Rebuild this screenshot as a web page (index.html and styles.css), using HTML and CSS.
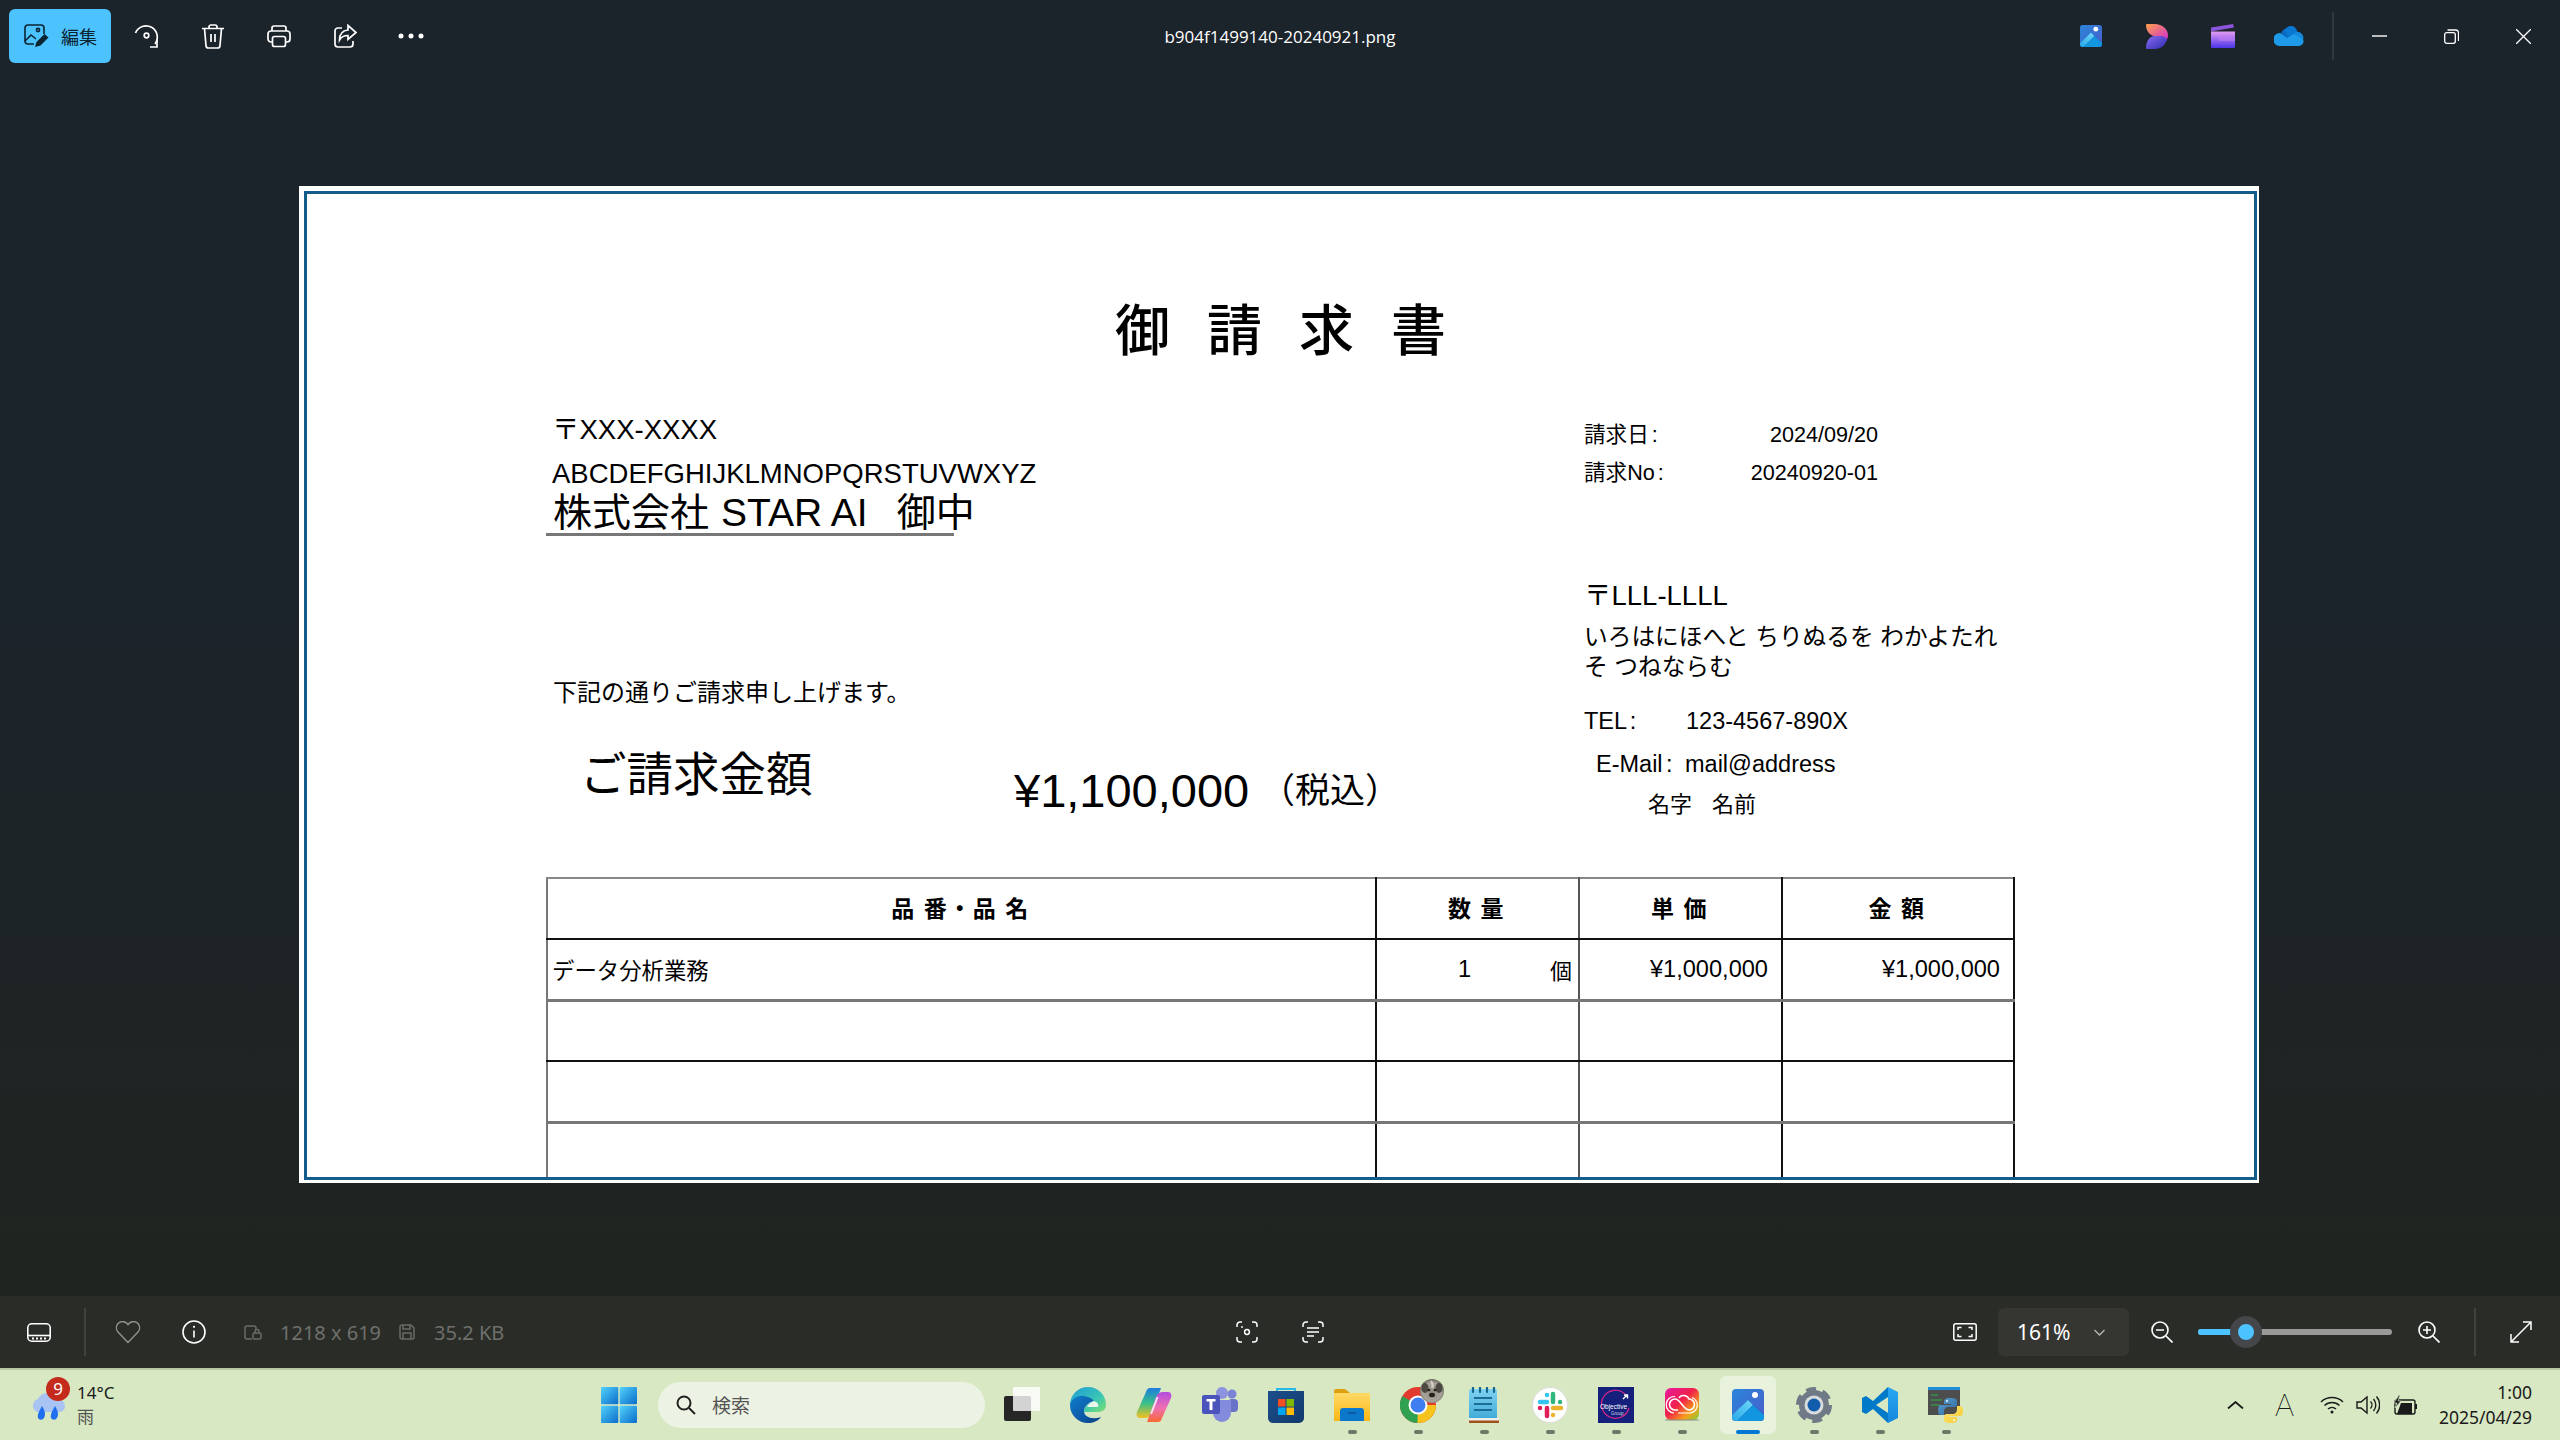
FILE: index.html
```html
<!DOCTYPE html>
<html lang="ja">
<head>
  <meta charset="UTF-8">
  <title>b904f1499140-20240921.png</title>
  <link rel="stylesheet" href="styles.css">
</head>
<body>
  <svg class="defs" width="0" height="0">
    <defs>
      <linearGradient id="photoBg" x1="0" y1="0" x2="1" y2="1"><stop offset="0" stop-color="#2a86dc"/><stop offset="1" stop-color="#4a5cc8"/></linearGradient>
      <linearGradient id="photoHill" x1="0" y1="1" x2="1" y2="0"><stop offset="0" stop-color="#27a8ea"/><stop offset="1" stop-color="#6fd8f8"/></linearGradient>
      <linearGradient id="designTop" x1="0" y1="0" x2="1" y2="1"><stop offset="0" stop-color="#ffa04a"/><stop offset="1" stop-color="#d02fd0"/></linearGradient>
      <linearGradient id="designLow" x1="0" y1="0" x2="1" y2="1"><stop offset="0" stop-color="#8a6cf0"/><stop offset="1" stop-color="#2b2bb0"/></linearGradient>
      <linearGradient id="clip" x1="0" y1="0" x2="0" y2="1"><stop offset="0" stop-color="#e59cf2"/><stop offset="1" stop-color="#4a35e8"/></linearGradient>
      <linearGradient id="winLogo" x1="0" y1="0" x2="1" y2="1"><stop offset="0" stop-color="#52d2fb"/><stop offset="1" stop-color="#0a6ccb"/></linearGradient>
      <linearGradient id="edgeTop" x1="0" y1="0" x2="1" y2="1"><stop offset="0" stop-color="#1f9bd8"/><stop offset="0.6" stop-color="#39c6b4"/><stop offset="1" stop-color="#7fe06a"/></linearGradient>
      <linearGradient id="edgeLow" x1="0" y1="0" x2="1" y2="1"><stop offset="0" stop-color="#0f7fd0"/><stop offset="1" stop-color="#0b3f86"/></linearGradient>
      <linearGradient id="copA" x1="0" y1="0" x2="0" y2="1"><stop offset="0" stop-color="#1f7be0"/><stop offset="0.5" stop-color="#36c08a"/><stop offset="1" stop-color="#f4c020"/></linearGradient>
      <linearGradient id="copB" x1="0" y1="0" x2="0" y2="1"><stop offset="0" stop-color="#b44ee0"/><stop offset="0.55" stop-color="#f070b0"/><stop offset="1" stop-color="#f86a30"/></linearGradient>
      <linearGradient id="storeBag" x1="0" y1="0" x2="1" y2="1"><stop offset="0" stop-color="#1c4f8c"/><stop offset="1" stop-color="#123a6c"/></linearGradient>
      <linearGradient id="folder" x1="0" y1="0" x2="0" y2="1"><stop offset="0" stop-color="#ffd966"/><stop offset="1" stop-color="#fcb614"/></linearGradient>
      <linearGradient id="note" x1="0" y1="0" x2="0" y2="1"><stop offset="0" stop-color="#7ed2f0"/><stop offset="1" stop-color="#3fa9d8"/></linearGradient>
      <linearGradient id="cc" x1="0" y1="0" x2="1" y2="1"><stop offset="0" stop-color="#e81aa0"/><stop offset="0.45" stop-color="#f0204a"/><stop offset="0.75" stop-color="#f8a018"/><stop offset="1" stop-color="#7ed03a"/></linearGradient>
      <linearGradient id="vsLight" x1="0" y1="0" x2="0" y2="1"><stop offset="0" stop-color="#28a8f2"/><stop offset="1" stop-color="#1488dc"/></linearGradient>
      <linearGradient id="pyBlue" x1="0" y1="0" x2="1" y2="1"><stop offset="0" stop-color="#5a9fd4"/><stop offset="1" stop-color="#306998"/></linearGradient>
      <linearGradient id="pyYellow" x1="0" y1="0" x2="1" y2="1"><stop offset="0" stop-color="#ffe873"/><stop offset="1" stop-color="#f8c92e"/></linearGradient>
      <radialGradient id="dog" cx="0.5" cy="0.55" r="0.55"><stop offset="0" stop-color="#8f8b82"/><stop offset="0.7" stop-color="#a9a499"/><stop offset="1" stop-color="#6a665e"/></radialGradient>
    </defs>
  </svg>

  <div class="app">
    <header class="toolbar">
      <div class="toolbar-left">
        <button class="edit-btn">
          <svg width="26" height="24" viewBox="0 0 26 24" fill="none" stroke="#0b2431" stroke-width="1.6"><path d="M10 20H4a3 3 0 0 1-3-3V4a3 3 0 0 1 3-3h13a3 3 0 0 1 3 3v6"/><path d="M1 17l6-6 5 4"/><circle cx="14" cy="6" r="1.6"/><path d="M11 23l1.500-5 8-8 4 3.500-8 8z" fill="#0b2431" stroke="none"/></svg>
          <span>編集</span>
        </button>
        <span class="slot"><svg width="26" height="26" viewBox="0 0 26 26" fill="none" stroke="#fff" stroke-width="1.700"><path d="M1.500 10A11.300 11.300 0 1 1 21 21"/><path d="M16 24h7v-7"/><circle cx="12.500" cy="12.500" r="2.300"/></svg></span>
        <span class="slot"><svg width="24" height="25" viewBox="0 0 24 25" fill="none" stroke="#fff" stroke-width="1.700"><path d="M1 4.500h22M8 4.500V3a2 2 0 0 1 2-2h4a2 2 0 0 1 2 2v1.500"/><path d="M3.500 4.500l1.500 17a2.500 2.500 0 0 0 2.500 2.500h9a2.500 2.500 0 0 0 2.500-2.500l1.500-17"/><path d="M10 10v8M14 10v8"/></svg></span>
        <span class="slot"><svg width="24" height="24" viewBox="0 0 24 24" fill="none" stroke="#fff" stroke-width="1.700"><path d="M5 7V4a2 2 0 0 1 2-2h10a2 2 0 0 1 2 2v3"/><path d="M5 18H4a3 3 0 0 1-3-3v-5a3 3 0 0 1 3-3h16a3 3 0 0 1 3 3v5a3 3 0 0 1-3 3h-1"/><rect x="5.500" y="12.500" width="13" height="10" rx="2"/></svg></span>
        <span class="slot"><svg width="24" height="24" viewBox="0 0 24 24" fill="none" stroke="#fff" stroke-width="1.700"><path d="M9 4H5a3 3 0 0 0-3 3v13a3 3 0 0 0 3 3h12a3 3 0 0 0 3-3v-3"/><path d="M15 1.500l8 7-8 7v-4c-4 0-6.500 1-8.500 4.500 0-6 3.500-9.500 8.500-10z"/></svg></span>
        <span class="slot"><svg width="26" height="6" viewBox="0 0 26 6" fill="#fff"><circle cx="3" cy="3" r="2.500"/><circle cx="13" cy="3" r="2.500"/><circle cx="23" cy="3" r="2.500"/></svg></span>
      </div>
      <div class="file-name">b904f1499140-20240921.png</div>
      <div class="toolbar-right">
        <span class="slot"><svg width="22" height="22" viewBox="0 0 32 32"><rect width="32" height="32" rx="4" fill="url(#photoBg)"/><path d="M0 26L16 11l16 15v2a4 4 0 0 1-4 4H4a4 4 0 0 1-4-4z" fill="#1a4fa8"/><path d="M0 26L16 11l5 5L5 32H4a4 4 0 0 1-4-4z" fill="url(#photoHill)"/><path d="M5 32l16-16 11 10v2a4 4 0 0 1-4 4z" fill="#1296e0"/><circle cx="23" cy="6" r="3.500" fill="#fff"/></svg></span>
        <span class="slot"><svg width="22" height="25" viewBox="0 0 22 25"><path d="M0 1a1 1 0 0 1 1-1h8c7 0 13 5 13 11 0 2-.500 4-1.500 5-1-2-4-4-8-4H8C3 11 0 6 0 1z" fill="url(#designTop)"/><path d="M0 24c0-6 3-12 9-12h4c5 0 8 2 8 4-2 5-6 9-12 9H1a1 1 0 0 1-1-1z" fill="url(#designLow)"/></svg></span>
        <span class="slot"><svg width="24" height="24" viewBox="0 0 24 24"><path d="M0 3.500L22 0l1 3.500L0 7.500z" fill="#8a55d8"/><path d="M0 7.500h24V23a1 1 0 0 1-1 1H1a1 1 0 0 1-1-1z" fill="url(#clip)"/><rect x="8" y="12" width="16" height="5" fill="#c07cf0" opacity=".6"/></svg></span>
        <span class="slot"><svg width="30" height="20" viewBox="0 0 30 20"><path d="M7 7a9 9 0 0 1 16-1l-9 8-8-1z" fill="#0a68bd"/><path d="M11 5a6 6 0 0 1 12 2l-8 7z" fill="#0a78d0"/><path d="M22 6a6 6 0 0 1 7 8l-14 0z" fill="#1488da"/><path d="M6 7a6.500 6.500 0 0 0-.500 13H25a4.500 4.500 0 0 0 4-6.500L20 8l-7 4z" fill="#1e9be8"/></svg></span>
        <span class="toolbar-sep"></span>
        <span class="win-btn"><svg width="15" height="2" viewBox="0 0 15 2"><path d="M0 1h15" stroke="#fff" stroke-width="1.400"/></svg></span>
        <span class="win-btn"><svg width="15" height="15" viewBox="0 0 15 15" fill="none" stroke="#fff" stroke-width="1.300"><rect x=".7" y="3.700" width="10.600" height="10.600" rx="2"/><path d="M3.500 1h8a3 3 0 0 1 3 3v8"/></svg></span>
        <span class="win-btn"><svg width="15" height="15" viewBox="0 0 15 15" stroke="#fff" stroke-width="1.300"><path d="M0 0l15 15M15 0L0 15"/></svg></span>
      </div>
    </header>

    <main class="viewer">
      <div class="doc">
        <div class="sheet">
          <h1 class="doc-title">御請求書</h1>
          <div class="doc-head">
            <div class="doc-left">
              <div class="to-zip">〒XXX-XXXX</div>
              <div class="to-addr">ABCDEFGHIJKLMNOPQRSTUVWXYZ</div>
              <div class="to-name">株式会社<span class="to-corp">STAR AI</span><span class="to-honor">御中</span></div>
              <div class="notice">下記の通りご請求申し上げます。</div>
              <div class="amount-row">
                <span class="amount-label">ご請求金額</span>
                <span class="amount-value">¥1,100,000</span>
                <span class="amount-tax">（税込）</span>
              </div>
            </div>
            <div class="doc-right">
              <div class="meta meta-date"><span>請求日 :</span><span>2024/09/20</span></div>
              <div class="meta meta-no"><span>請求No :</span><span>20240920-01</span></div>
              <div class="from-zip">〒LLL-LLLL</div>
              <div class="from-addr">いろはにほへと ちりぬるを わかよたれ<br>そ つねならむ</div>
              <div class="contact contact-tel"><span>TEL :</span><span>123-4567-890X</span></div>
              <div class="contact contact-mail"><span>E-Mail :</span><span>mail@address</span></div>
              <div class="signer"><span>名字</span><span>名前</span></div>
            </div>
          </div>
          <table class="items">
            <colgroup><col class="col-name"><col class="col-qty"><col class="col-price"><col class="col-total"></colgroup>
            <tr class="head-row">
              <th>品 番・品 名</th>
              <th>数 量</th>
              <th>単 価</th>
              <th>金 額</th>
            </tr>
            <tr class="soft">
              <td class="name">データ分析業務</td>
              <td><div class="qty"><span>1</span><span>個</span></div></td>
              <td class="num">¥1,000,000</td>
              <td class="num">¥1,000,000</td>
            </tr>
            <tr><td></td><td></td><td></td><td></td></tr>
            <tr class="soft"><td></td><td></td><td></td><td></td></tr>
            <tr><td></td><td></td><td></td><td></td></tr>
          </table>
        </div>
      </div>
    </main>

    <footer class="status">
      <div class="status-left">
        <span class="film"><svg width="24" height="19" viewBox="0 0 24 19" fill="none" stroke="#fff" stroke-width="1.600"><rect x=".8" y=".8" width="22.400" height="17.400" rx="4"/><path d="M1 12.500h22"/><path d="M5 15.500h2M9 15.500h2M13 15.500h2M17 15.500h2" stroke-width="2"/></svg></span>
        <span class="status-sep"></span>
        <span class="slot"><svg width="26" height="23" viewBox="0 0 26 23" fill="none" stroke="#8f908c" stroke-width="1.500"><path d="M13 21.500L3 11a6.500 6.500 0 0 1 0-8.500 6.500 6.500 0 0 1 10 1 6.500 6.500 0 0 1 10-1 6.500 6.500 0 0 1 0 8.500z"/></svg></span>
        <span class="slot"><svg width="24" height="24" viewBox="0 0 24 24" fill="none" stroke="#fff" stroke-width="1.600"><circle cx="12" cy="12" r="11"/><path d="M12 10.500v7"/><circle cx="12" cy="6.800" r="1.100" fill="#fff" stroke="none"/></svg></span>
        <svg class="size-icon" width="18" height="15" viewBox="0 0 18 15" fill="none" stroke="#6a6b67" stroke-width="1.500"><path d="M8 14H3a2 2 0 0 1-2-2V3a2 2 0 0 1 2-2h7a2 2 0 0 1 2 2v2"/><rect x="9" y="8" width="8" height="6" rx="1.500"/><path d="M11 8V6.500a2 2 0 0 1 4 0V8"/></svg>
        <span class="status-text size-text">1218 x 619</span>
        <svg class="save-icon" width="16" height="16" viewBox="0 0 16 16" fill="none" stroke="#6a6b67" stroke-width="1.500"><path d="M1 3a2 2 0 0 1 2-2h9l3 3v9a2 2 0 0 1-2 2H3a2 2 0 0 1-2-2z"/><path d="M4 1v4h7V1M4 15V9h8v6"/></svg>
        <span class="status-text">35.2 KB</span>
      </div>
      <div class="status-center">
        <span class="slot"><svg width="22" height="22" viewBox="0 0 22 22" fill="none" stroke="#fff" stroke-width="1.500"><path d="M1 6V4a3 3 0 0 1 3-3h2M16 1h2a3 3 0 0 1 3 3v2M21 16v2a3 3 0 0 1-3 3h-2M6 21H4a3 3 0 0 1-3-3v-2"/><circle cx="11" cy="11" r="2.400"/><circle cx="6" cy="6" r=".9" fill="#fff" stroke="none"/></svg></span>
        <span class="slot"><svg width="22" height="22" viewBox="0 0 22 22" fill="none" stroke="#fff" stroke-width="1.500"><path d="M1 6V4a3 3 0 0 1 3-3h2M16 1h2a3 3 0 0 1 3 3v2M21 16v2a3 3 0 0 1-3 3h-2M6 21H4a3 3 0 0 1-3-3v-2"/><path d="M5 7h12M5 11h12M5 15h7"/></svg></span>
      </div>
      <div class="status-right">
        <span class="slot"><svg width="24" height="18" viewBox="0 0 24 18" fill="none" stroke="#fff" stroke-width="1.500"><rect x=".8" y=".8" width="22.400" height="16.400" rx="2"/><path d="M5 7V4.500h3.500M19 7V4.500h-3.500M5 11v2.500h3.500M19 11v2.500h-3.500"/></svg></span>
        <div class="zoom-select"><span>161%</span><svg width="11" height="7" viewBox="0 0 11 7" fill="none" stroke="#b8b9b5" stroke-width="1.300"><path d="M.5 1l5 5 5-5"/></svg></div>
        <span class="slot"><svg width="22" height="22" viewBox="0 0 22 22" fill="none" stroke="#fff" stroke-width="1.600"><circle cx="9" cy="9" r="8"/><path d="M5 9h8M15 15l6.500 6.500"/></svg></span>
        <div class="slider"><div class="slider-fill"></div><div class="slider-knob"></div></div>
        <span class="slot"><svg width="22" height="22" viewBox="0 0 22 22" fill="none" stroke="#fff" stroke-width="1.600"><circle cx="9" cy="9" r="8"/><path d="M5 9h8M9 5v8M15 15l6.500 6.500"/></svg></span>
        <span class="status-sep end"></span>
        <span class="slot"><svg width="22" height="22" viewBox="0 0 22 22" fill="none" stroke="#fff" stroke-width="1.500"><path d="M13 1h8v8M21 1L1 21M1 13v8h8"/></svg></span>
      </div>
    </footer>
  </div>

  <nav class="taskbar">
    <div class="weather">
      <div class="weather-icon">
        <svg width="36" height="32" viewBox="0 0 36 32"><path d="M7 21a7 7 0 0 1 1-13 11 11 0 0 1 20 1 6 6 0 0 1 7 6 6 6 0 0 1-7 6z" fill="#a9c4f2"/><path d="M12 15c3 5 4 8 2 12a3.500 3.500 0 0 1-6 0c-1-4 2-8 4-12z" fill="#1f6ff0"/><path d="M25 15c3 5 4 8 2 12a3.500 3.500 0 0 1-6 0c-1-4 2-8 4-12z" fill="#1f6ff0"/></svg>
        <span class="badge">9</span>
      </div>
      <div class="weather-text"><div>14°C</div><div class="weather-sub">雨</div></div>
    </div>
    <span class="start"><svg width="36" height="36" viewBox="0 0 36 36" fill="url(#winLogo)"><rect width="17.300" height="17.300" rx="1"/><rect x="18.700" width="17.300" height="17.300" rx="1"/><rect y="18.700" width="17.300" height="17.300" rx="1"/><rect x="18.700" y="18.700" width="17.300" height="17.300" rx="1"/></svg></span>
    <div class="search">
      <svg width="20" height="20" viewBox="0 0 20 20" fill="none" stroke="#222" stroke-width="2"><circle cx="8" cy="8" r="6.500"/><path d="M13 13l6 6"/></svg>
      <span>検索</span>
    </div>
    <div class="task-icons">
      <div class="task-item"><svg width="36" height="36" viewBox="0 0 36 36"><rect y="9" width="27" height="25" rx="2" fill="#262626"/><rect x="9" width="27" height="24" rx="1" fill="#fff" fill-opacity=".8"/></svg></div>
      <div class="task-item"><svg width="36" height="36" viewBox="0 0 36 36"><path d="M0 18a18 18 0 0 1 36 0c0 5-4 7-8 7H14c0-6 5-10 10-11-4-4-18-3-24 4z" fill="url(#edgeTop)"/><path d="M0 18C1 12 8 8 14 9c4 1 8 2 10 5-5 1-10 5-10 10 0 6 8 9 17 6-3 4-8 6-13 6A18 18 0 0 1 0 18z" fill="url(#edgeLow)"/><path d="M17 20c1-3 4-5 7-6 3 1 5 3 4 6z" fill="#eaf6ec"/></svg></div>
      <div class="task-item"><svg width="36" height="36" viewBox="0 0 36 36"><path d="M14 1h11l-9 25c-1 3-4 5-7 5H4c-3 0-4-3-3-6l9-20c1-3 2-4 4-4z" fill="url(#copA)"/><path d="M22 35H11l9-25c1-3 4-5 7-5h5c3 0 4 3 3 6l-9 20c-1 3-2 4-4 4z" fill="url(#copB)"/><path d="M21.500 10L15 27" stroke="#fff" stroke-width="2" opacity=".8"/></svg></div>
      <div class="task-item"><svg width="36" height="36" viewBox="0 0 36 36"><circle cx="30" cy="7" r="4.500" fill="#7b83d6"/><circle cx="20" cy="6" r="6" fill="#8c94e0"/><rect x="26" y="12" width="10" height="13" rx="4" fill="#6a72c8"/><path d="M11 13h18v13a9 9 0 0 1-18 0z" fill="#838bdc"/><rect y="8" width="18" height="19" rx="2" fill="#4b53bc"/><path d="M4.500 12h9v2.500h-3V23H7.500v-8.500h-3z" fill="#fff"/></svg></div>
      <div class="task-item"><svg width="36" height="36" viewBox="0 0 36 36"><path d="M9 5V2h18v3" fill="none" stroke="#27b8e8" stroke-width="2"/><path d="M0 4h36v27a5 5 0 0 1-5 5H5a5 5 0 0 1-5-5z" fill="url(#storeBag)"/><rect x="10" y="12" width="7.500" height="7.500" fill="#f25022"/><rect x="18.500" y="12" width="7.500" height="7.500" fill="#7fba00"/><rect x="10" y="20.500" width="7.500" height="7.500" fill="#00a4ef"/><rect x="18.500" y="20.500" width="7.500" height="7.500" fill="#ffb900"/></svg></div>
      <div class="task-item"><svg width="36" height="32" viewBox="0 0 36 32"><path d="M0 2a2 2 0 0 1 2-2h9l5 4h20v8H0z" fill="#dfa010"/><path d="M0 4h36v28H0z" fill="url(#folder)"/><path d="M6 22a3 3 0 0 1 3-3h18a3 3 0 0 1 3 3v10H6z" fill="#0c78cc"/><path d="M14 24h8" stroke="#0a4f96" stroke-width="1.500"/></svg><span class="dot"></span></div>
      <div class="task-item"><svg width="36" height="36" viewBox="0 0 36 36" class="chrome"><circle cx="18" cy="18" r="18" fill="#e23a2e"/><path d="M18 18L2.400 9A18 18 0 0 0 18 36z" fill="#2fa150"/><path d="M18 18h18a18 18 0 0 1-18 18l-.5-.2z" fill="#f6c21c"/><circle cx="18" cy="18" r="9.500" fill="#fff"/><circle cx="18" cy="18" r="7.500" fill="#3e7ef0"/></svg><svg class="avatar" width="24" height="24" viewBox="0 0 24 24"><circle cx="12" cy="12" r="12" fill="url(#dog)"/><ellipse cx="5" cy="9" rx="3.500" ry="5" fill="#4c4942"/><ellipse cx="19" cy="9" rx="3.500" ry="5" fill="#4c4942"/><circle cx="9" cy="11" r="1.300" fill="#1f1d1a"/><circle cx="15" cy="11" r="1.300" fill="#1f1d1a"/><ellipse cx="12" cy="16" rx="3" ry="2.200" fill="#26231f"/><path d="M11 2c2 3 2 5 1 7" stroke="#d6d2c8" stroke-width="2" fill="none"/></svg><span class="dot"></span></div>
      <div class="task-item"><svg width="30" height="36" viewBox="0 0 30 36"><rect y="33" width="30" height="3.500" fill="#a0521c"/><rect y="2" width="28" height="31" rx="2" fill="url(#note)"/><rect y="31" width="30" height="2.500" fill="#eee"/><path d="M4 0v5M11 0v5M18 0v5M25 0v5" stroke="#14688f" stroke-width="2.200" stroke-linecap="round"/><path d="M5 11h18M5 17h18M5 23h18" stroke="#1a6d99" stroke-width="2"/></svg><span class="dot"></span></div>
      <div class="task-item"><svg width="36" height="36" viewBox="0 0 36 36"><circle cx="18" cy="18" r="17.500" fill="#fff" stroke="#ddd"/><g stroke-width="4.500" stroke-linecap="round" fill="none"><path d="M8 15h7" stroke="#36c5f0"/><path d="M15 8v0" stroke="#36c5f0"/><path d="M21 7v8" stroke="#2eb67d"/><path d="M28 15h0" stroke="#2eb67d"/><path d="M21 21h8" stroke="#ecb22e"/><path d="M21 28h0" stroke="#ecb22e"/><path d="M15 21v8" stroke="#e01e5a"/><path d="M8 21h0" stroke="#e01e5a"/></g></svg><span class="dot"></span></div>
      <div class="task-item"><svg width="36" height="36" viewBox="0 0 36 36"><rect width="36" height="36" fill="#14207c"/><path d="M27 7A14 14 0 1 0 31 21" fill="none" stroke="#e0288c" stroke-width="1.200"/><path d="M25 12l4-4M26 8h3.500v3.500" fill="none" stroke="#fff" stroke-width="1.400"/><text class="obj-title" x="2" y="22">Objective</text><text class="obj-sub" x="13" y="28">Group</text></svg><span class="dot"></span></div>
      <div class="task-item"><svg width="34" height="34" viewBox="0 0 34 34"><rect width="34" height="32" rx="6" fill="url(#cc)"/><rect y="31" width="34" height="2" rx="1" fill="#888" opacity=".5"/><path d="M13 22H10a5.500 5.500 0 0 1 0-11c3 0 5 3 7 5.500s4 5.500 7 5.500a5.500 5.500 0 0 0 0-11c-1.500-4-8-5-10-1" fill="none" stroke="#fff" stroke-width="1.600"/><path d="M13 25h11a8 8 0 0 0 3-15.500M10 8.500a8 8 0 0 0-1 16.500" fill="none" stroke="#fff" stroke-width="1.200"/></svg><span class="dot"></span></div>
      <div class="task-item active"><svg width="32" height="32" viewBox="0 0 32 32"><rect width="32" height="32" rx="4" fill="url(#photoBg)"/><path d="M0 26L16 11l16 15v2a4 4 0 0 1-4 4H4a4 4 0 0 1-4-4z" fill="#1a4fa8"/><path d="M0 26L16 11l5 5L5 32H4a4 4 0 0 1-4-4z" fill="url(#photoHill)"/><path d="M5 32l16-16 11 10v2a4 4 0 0 1-4 4z" fill="#1296e0"/><circle cx="23" cy="6" r="3" fill="#fff"/></svg><span class="dot"></span></div>
      <div class="task-item"><svg width="36" height="36" viewBox="0 0 36 36"><circle cx="18" cy="18" r="15" fill="#6f7a86"/><circle cx="18" cy="18" r="16" fill="none" stroke="#6f7a86" stroke-width="4" stroke-dasharray="10 6.750"/><circle cx="18" cy="18" r="9.500" fill="#d8dbdd"/><circle cx="18" cy="18" r="6.500" fill="#115cab"/></svg><span class="dot"></span></div>
      <div class="task-item"><svg width="36" height="36" viewBox="0 0 36 36"><path d="M26 0l10 5v26l-10 5z" fill="url(#vsLight)"/><path d="M26 0L11 14 4 9l-4 2v14l4 2 7-5 15 14V26L14 18l12-8z" fill="#0079c8"/></svg><span class="dot"></span></div>
      <div class="task-item"><svg width="36" height="36" viewBox="0 0 36 36"><rect y="2" width="32" height="26" fill="#4d4d4d"/><rect y="0" width="32" height="3" fill="#1c8fd8"/><path d="M3 8h7M3 13h11M3 18h9" stroke="#2bb24c" stroke-width="1"/><path d="M22 11c-5 0-6 2-6 4v2h7v1h-10c-2 0-3 2-3 5s1 5 3 5h3v-4c0-2 2-4 4-4h6c2 0 3-1 3-3v-3c0-2-2-3-7-3z" fill="url(#pyBlue)"/><path d="M23 36c5 0 6-2 6-4v-2h-7v-1h10c2 0 3-2 3-5s-1-5-3-5h-3v4c0 2-2 4-4 4h-6c-2 0-3 1-3 3v3c0 2 2 3 7 3z" fill="url(#pyYellow)"/><circle cx="19" cy="14" r="1" fill="#fff"/><circle cx="26" cy="33" r="1" fill="#fff"/></svg><span class="dot"></span></div>
    </div>
    <div class="tray">
      <svg class="tray-chevron" width="17" height="8" viewBox="0 0 17 8" fill="none" stroke="#1a1a1a" stroke-width="1.800"><path d="M1 7.500L8.500 1 16 7.500"/></svg>
      <span class="ime">A</span>
      <svg width="24" height="18" viewBox="0 0 24 18" fill="none" stroke="#1a1a1a" stroke-width="1.500"><path d="M1 6a16 16 0 0 1 22 0M4.500 9.500a11 11 0 0 1 15 0M8 13a6 6 0 0 1 8 0"/><circle cx="12" cy="16" r="1.500" fill="#1a1a1a" stroke="none"/></svg>
      <svg width="24" height="20" viewBox="0 0 24 20" fill="none" stroke="#1a1a1a" stroke-width="1.400"><path d="M1 7v6h4l6 5V2L5 7z"/><path d="M14.500 6.500a5 5 0 0 1 0 7M17.500 4a9 9 0 0 1 0 12M20.500 1.500a13 13 0 0 1 0 17"/></svg>
      <svg width="25" height="20" viewBox="0 0 25 20"><path d="M3 7a2 2 0 0 1 2-2h16a2 2 0 0 1 2 2v10a2 2 0 0 1-2 2H5a2 2 0 0 1-2-2z" fill="none" stroke="#1a1a1a" stroke-width="1.400"/><path d="M5 19l4-11h11v11z" fill="#1a1a1a"/><rect x="23" y="9" width="2" height="5" fill="#1a1a1a"/><path d="M7 0L2 8h3L3 13l6-7H6l2-6z" fill="#1a1a1a" stroke="#d8e8c3" stroke-width=".6"/></svg>
      <div class="clock"><div>1:00</div><div>2025/04/29</div></div>
    </div>
  </nav>
</body>
</html>
```

FILE: styles.css
```css
* {
  box-sizing: border-box;
}
body {
  margin: 0;
  width: 2560px;
  height: 1440px;
  overflow: hidden;
  display: flex;
  flex-direction: column;
  font-family: "Noto Sans", "Noto Sans CJK JP", sans-serif;
  background: #1c232b;
}
.defs {
  position: absolute;
}
.app {
  height: 1368px;
  display: flex;
  flex-direction: column;
  background: linear-gradient(#1b232b, #1b232b 40%, #20241f 100%);
}

/* top bar */
.toolbar {
  height: 72px;
  flex: none;
  display: grid;
  grid-template-columns: 1fr auto 1fr;
  align-items: center;
}
.toolbar-left, .toolbar-right {
  display: flex;
  align-items: center;
}
.toolbar-right {
  justify-content: flex-end;
  padding-right: 1px;
}
.edit-btn {
  width: 102px;
  height: 54px;
  margin: 0 3px 0 9px;
  padding: 0 0 0 15px;
  display: flex;
  align-items: center;
  gap: 11px;
  border: 0;
  border-radius: 6px;
  background: #4cc2ff;
  color: #0b2431;
  font-family: "Noto Sans CJK JP", sans-serif;
  font-size: 18px;
}
.slot {
  width: 66px;
  height: 48px;
  flex: none;
  display: flex;
  align-items: center;
  justify-content: center;
}
.file-name {
  color: #fff;
  font-family: "Open Sans", sans-serif;
  font-size: 17px;
}
.toolbar-sep {
  width: 2px;
  height: 48px;
  margin: 0 9px 0 10px;
  background: #30373e;
}
.win-btn {
  width: 72px;
  height: 48px;
  display: flex;
  align-items: center;
  justify-content: center;
}

/* image area */
.viewer {
  flex: 1;
  display: flex;
  justify-content: center;
  padding-top: 114px;
  min-height: 0;
}
.doc {
  width: 1960px;
  height: 997px;
  margin-right: 2px;
  padding: 5px 2px 3px 5px;
  background: #fff;
}
.sheet {
  height: 100%;
  border: 3px solid #145c8a;
  background: #fff;
  color: #000;
  overflow: hidden;
  padding-left: 239px;
  font-family: "Liberation Sans", "Noto Sans CJK JP", sans-serif;
}
.doc-title {
  margin: 107px 0 0 -239px;
  height: 60px;
  line-height: 60px;
  text-align: center;
  font-size: 55px;
  font-weight: 500;
  letter-spacing: 37px;
  text-indent: 37px;
}
.doc-head {
  display: flex;
  margin-top: 39px;
}
.doc-left {
  width: 1038px;
  flex: none;
}
.to-zip {
  margin-top: 12px;
  padding-left: 6px;
  line-height: 36px;
  font-size: 27.5px;
}
.to-addr {
  margin-top: 11px;
  padding-left: 6px;
  line-height: 30px;
  font-size: 27.5px;
}
.to-name {
  width: 408px;
  height: 47px;
  padding-left: 7px;
  line-height: 47px;
  font-size: 39px;
  white-space: nowrap;
  border-bottom: 3px solid #777;
}
.to-corp {
  margin-left: 12px;
}
.to-honor {
  margin-left: 29px;
}
.notice {
  margin-top: 142px;
  padding-left: 7px;
  line-height: 30px;
  font-size: 24px;
}
.amount-row {
  display: flex;
  align-items: flex-start;
  margin-top: 36px;
}
.amount-label {
  width: 468px;
  margin-top: 3px;
  padding-left: 34px;
  line-height: 56px;
  font-size: 46.5px;
}
.amount-value {
  width: 246px;
  margin-top: 17px;
  line-height: 60px;
  font-size: 47px;
}
.amount-tax {
  margin-top: 17px;
  line-height: 60px;
  font-size: 35px;
}
.doc-right {
  flex: 1;
}
.meta {
  width: 294px;
  display: flex;
  justify-content: space-between;
  line-height: 26px;
  font-size: 21.6px;
}
.meta span:first-child, .contact span:first-child {
  word-spacing: -3px;
}
.meta-date {
  margin-top: 22px;
}
.meta-no {
  margin-top: 12px;
}
.from-zip {
  margin-top: 93px;
  line-height: 34px;
  font-size: 27.5px;
}
.from-addr {
  margin-top: 9px;
  line-height: 30px;
  font-size: 23.7px;
}
.contact {
  display: flex;
  line-height: 30px;
  font-size: 23.5px;
  white-space: nowrap;
}
.contact-tel {
  margin-top: 24px;
}
.contact-tel span:first-child {
  width: 102px;
}
.contact-mail {
  margin-top: 13px;
  padding-left: 12px;
}
.contact-mail span:first-child {
  width: 89px;
}
.signer {
  margin-top: 11px;
  padding-left: 64px;
  display: flex;
  gap: 20px;
  line-height: 30px;
  font-size: 22px;
}

/* line items */
.items {
  width: 1467px;
  margin-top: 56px;
  border-collapse: collapse;
  table-layout: fixed;
}
.col-name { width: 829px; }
.col-qty { width: 203px; }
.col-price { width: 203px; }
.col-total { width: 232px; }
.items tr {
  height: 61px;
}
.items th, .items td {
  border: 2px solid #111;
  padding: 0;
  font-size: 23px;
}
.items th {
  padding: 0 2px 3px 0;
  font-weight: 700;
  letter-spacing: 1.5px;
}
.head-row th {
  border-top-color: #888;
}
.soft td {
  border-bottom: 3px solid #777;
}
.items td:first-child, .items th:first-child {
  border-left-color: #777;
}
.items td:nth-child(2), .items th:nth-child(2) {
  border-right-color: #555;
}
.items .name {
  padding: 0 0 1px 4px;
  font-size: 22.4px;
}
.items .num {
  padding-right: 13px;
  text-align: right;
  font-size: 23.6px;
}
.qty {
  display: flex;
  align-items: center;
  justify-content: space-between;
  padding: 0 6px 0 81px;
  font-size: 23.6px;
}
.qty span:last-child {
  font-size: 22px;
}

/* bottom bar */
.status {
  height: 72px;
  flex: none;
  display: grid;
  grid-template-columns: 1fr auto 1fr;
  align-items: center;
  background: #2a2c27;
}
.status-left, .status-center, .status-right {
  display: flex;
  align-items: center;
}
.status-right {
  justify-content: flex-end;
  padding-right: 6px;
}
.film {
  width: 78px;
  display: flex;
  justify-content: center;
}
.status-sep {
  width: 2px;
  height: 48px;
  margin: 0 9px 0 6px;
  background: #40423d;
}
.status-sep.end {
  margin: 0 12px;
}
.size-icon {
  margin: 0 18px 0 17px;
}
.save-icon {
  margin: 0 19px 0 18px;
}
.status-text {
  color: #6f706c;
  font-size: 20px;
}
.zoom-select {
  width: 131px;
  height: 48px;
  padding: 0 24px 0 19px;
  display: flex;
  align-items: center;
  justify-content: space-between;
  border-radius: 6px;
  background: #353632;
  color: #fff;
  font-size: 21px;
}
.slider {
  position: relative;
  width: 194px;
  height: 6px;
  margin: 0 4px 0 3px;
  border-radius: 3px;
  background: #9a9a98;
}
.slider-fill {
  width: 48px;
  height: 6px;
  border-radius: 3px;
  background: #4cc2ff;
}
.slider-knob {
  position: absolute;
  left: 32px;
  top: -13px;
  width: 32px;
  height: 32px;
  border: 8px solid #45464a;
  border-radius: 50%;
  background: #4cc2ff;
}

/* taskbar */
.taskbar {
  height: 72px;
  flex: none;
  display: flex;
  align-items: center;
  border-top: 2px solid #b8c8a4;
  background: #d7e8c3;
  color: #1a1a1a;
}
.weather {
  width: 586px;
  flex: none;
  display: flex;
  align-items: center;
  padding-left: 30px;
}
.weather-icon {
  position: relative;
  width: 36px;
  height: 32px;
  margin-top: 4px;
}
.badge {
  position: absolute;
  left: 16px;
  top: -14px;
  width: 24px;
  height: 24px;
  border-radius: 50%;
  background: #c42b1c;
  color: #fff;
  font-size: 17px;
  line-height: 24px;
  text-align: center;
}
.weather-text {
  margin-left: 11px;
  font-size: 17px;
  line-height: 24px;
}
.weather-sub {
  color: #555;
}
.start {
  width: 66px;
  display: flex;
  justify-content: center;
}
.search {
  width: 327px;
  height: 46px;
  margin: 0 4px 0 6px;
  padding-left: 18px;
  display: flex;
  align-items: center;
  gap: 16px;
  border-radius: 23px;
  background: #edf3e4;
  color: #555;
  font-size: 19px;
}
.task-icons {
  display: flex;
}
.task-item {
  position: relative;
  width: 66px;
  height: 70px;
  display: flex;
  align-items: center;
  justify-content: center;
}
.task-item.active::before {
  content: "";
  position: absolute;
  left: 5px;
  right: 5px;
  top: 6px;
  bottom: 6px;
  border-radius: 6px;
  background: #e9f2dd;
}
.task-item svg {
  position: relative;
}
.task-item .avatar {
  position: absolute;
  left: 35px;
  top: 9px;
}
.dot {
  position: absolute;
  left: 29px;
  bottom: 6px;
  width: 9px;
  height: 4px;
  border-radius: 2px;
  background: #6d7868;
}
.active .dot {
  left: 21px;
  width: 24px;
  background: #0078d4;
}
.obj-title {
  fill: #fff;
  font-family: "Liberation Sans", sans-serif;
  font-size: 6.5px;
}
.obj-sub {
  fill: #cfd3e8;
  font-family: "Liberation Sans", sans-serif;
  font-size: 4.5px;
}
.tray {
  margin-left: auto;
  padding-right: 28px;
  display: flex;
  align-items: center;
  gap: 12px;
}
.tray-chevron {
  margin-right: 19px;
}
.ime {
  width: 18px;
  margin-right: 15px;
  font-family: Roboto, sans-serif;
  font-weight: 100;
  font-size: 32px;
  line-height: 32px;
  text-align: center;
}
.clock {
  margin-left: 10px;
  text-align: right;
  font-size: 17.5px;
  line-height: 25px;
}
```
